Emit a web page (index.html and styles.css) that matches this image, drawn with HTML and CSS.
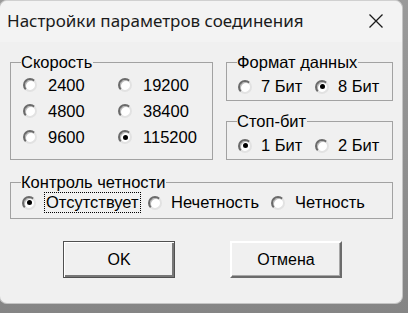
FILE: index.html
```html
<!DOCTYPE html>
<html lang="ru">
<head>
<meta charset="utf-8">
<title>Настройки параметров соединения</title>
<link rel="stylesheet" href="styles.css">
</head>
<body>
<div class="window">
  <div class="titlebar">
    <span class="title">Настройки параметров соединения</span>
    <svg class="close" width="16" height="16" viewBox="0 0 16 16"><path d="M1.5 1.5 L14.5 14.5 M14.5 1.5 L1.5 14.5" stroke="#1a1a1a" stroke-width="1.3" fill="none"/></svg>
  </div>
  <div class="content">
    <div class="top-row">
      <fieldset class="group speed">
        <legend>Скорость</legend>
        <div class="speed-grid">
          <label class="opt"><span class="radio"></span><span class="txt">2400</span></label>
          <label class="opt"><span class="radio"></span><span class="txt">19200</span></label>
          <label class="opt"><span class="radio"></span><span class="txt">4800</span></label>
          <label class="opt"><span class="radio"></span><span class="txt">38400</span></label>
          <label class="opt"><span class="radio"></span><span class="txt">9600</span></label>
          <label class="opt"><span class="radio checked"></span><span class="txt">115200</span></label>
        </div>
      </fieldset>
      <div class="right-col">
        <fieldset class="group small fmt">
          <legend>Формат данных</legend>
          <div class="pair">
            <label class="opt"><span class="radio"></span><span class="txt">7 Бит</span></label>
            <label class="opt"><span class="radio checked"></span><span class="txt">8 Бит</span></label>
          </div>
        </fieldset>
        <fieldset class="group small stop">
          <legend>Стоп-бит</legend>
          <div class="pair">
            <label class="opt"><span class="radio checked"></span><span class="txt">1 Бит</span></label>
            <label class="opt"><span class="radio"></span><span class="txt">2 Бит</span></label>
          </div>
        </fieldset>
      </div>
    </div>
    <fieldset class="group parity">
      <legend>Контроль четности</legend>
      <div class="parity-row">
        <label class="opt"><span class="radio checked"></span><span class="txt focus">Отсутствует</span></label>
        <label class="opt"><span class="radio"></span><span class="txt">Нечетность</span></label>
        <label class="opt"><span class="radio"></span><span class="txt">Четность</span></label>
      </div>
    </fieldset>
    <div class="buttons">
      <button class="btn default">OK</button>
      <button class="btn">Отмена</button>
    </div>
  </div>
</div>
</body>
</html>
```

FILE: styles.css
```css
html, body {
  margin: 0;
  padding: 0;
}
body {
  width: 408px;
  height: 313px;
  background: linear-gradient(#9a9a9a, #858585);
  overflow: hidden;
}
.window {
  width: 404px;
  height: 304px;
  margin-left: -1px;
  background: #f0f0f0;
  border: 1px solid #c4c4c4;
  border-top-color: #d0d0d0;
  border-radius: 8px;
  box-sizing: border-box;
  font-family: "Liberation Sans", Arial, sans-serif;
  font-size: 16.5px;
  color: #000;
  display: flex;
  flex-direction: column;
}
.titlebar {
  height: 41px;
  display: flex;
  align-items: center;
  justify-content: space-between;
  padding: 0 18px 0 7px;
  background: #f3f3f3;
  border-radius: 8px 8px 0 0;
}
.title {
  font-family: "Noto Sans", "Open Sans", sans-serif;
  font-size: 17px;
  color: #1b1b1b;
  padding-bottom: 2px;
}
.close {
  display: block;
  margin-top: -1px;
}
.content {
  padding: 12px 0 0 10px;
  display: flex;
  flex-direction: column;
}
.top-row {
  display: flex;
  gap: 13px;
}
.group {
  margin: 0;
  padding: 0;
  border: 1px solid #a2a2a2;
  min-width: 0;
}
.group legend {
  padding: 0 1px 0 0;
  margin-left: 10px;
  line-height: 16px;
  height: 16px;
}
.speed {
  width: 203px;
  height: 106px;
  box-sizing: border-box;
}
.speed-grid {
  display: grid;
  grid-template-columns: 95px 80px;
  grid-auto-rows: 26px;
  padding: 2px 0 0 12px;
}
.opt {
  display: flex;
  align-items: center;
  gap: 11px;
  white-space: nowrap;
}
.radio {
  width: 14px;
  height: 14px;
  flex: none;
  box-sizing: border-box;
  border-radius: 50%;
  background: #fff;
  border: 2px solid;
  border-color: #6a6a6a #e2e2e2 #e2e2e2 #6a6a6a;
  box-shadow: inset 1px 1px 0 #b8b8b8;
  display: flex;
  align-items: center;
  justify-content: center;
}
.radio.checked::after {
  content: "";
  width: 5px;
  height: 5px;
  border-radius: 50%;
  background: #000;
}
.right-col {
  display: flex;
  flex-direction: column;
  gap: 12px;
}
.small {
  width: 167px;
  height: 47px;
  box-sizing: border-box;
}
.pair {
  display: flex;
  padding: 7px 0 0 11px;
}
.pair .opt {
  gap: 9px;
  width: 78px;
}
.stop .pair {
  padding-top: 7px;
}
.parity {
  margin-top: 14px;
  width: 383px;
  height: 45px;
  box-sizing: border-box;
}
.parity-row {
  display: flex;
  padding: 3px 0 0 11px;
}
.parity-row .opt:nth-child(1) { width: 126px; gap: 11px; }
.parity-row .opt:nth-child(2) { width: 123px; gap: 9px; }
.parity-row .opt:nth-child(3) { gap: 10px; }
.focus {
  outline: 1px dotted #000;
  outline-offset: 0;
  margin-left: -2px;
  padding: 0 1px;
}
.buttons {
  display: flex;
  gap: 55px;
  margin-top: 22px;
  padding-left: 53px;
}
.btn {
  width: 112px;
  height: 37px;
  box-sizing: border-box;
  background: #f0f0f0;
  font-family: "Liberation Sans", Arial, sans-serif;
  font-size: 16px;
  color: #000;
  border: 2px solid;
  border-color: #ffffff #6b6b6b #6b6b6b #ffffff;
  box-shadow: inset -1px -1px 0 #a8a8a8;
  padding: 0;
}
.btn.default {
  border: 1px solid #505050;
  box-shadow: inset 1px 1px 0 #fff, inset -2px -2px 0 #777;
}
```
